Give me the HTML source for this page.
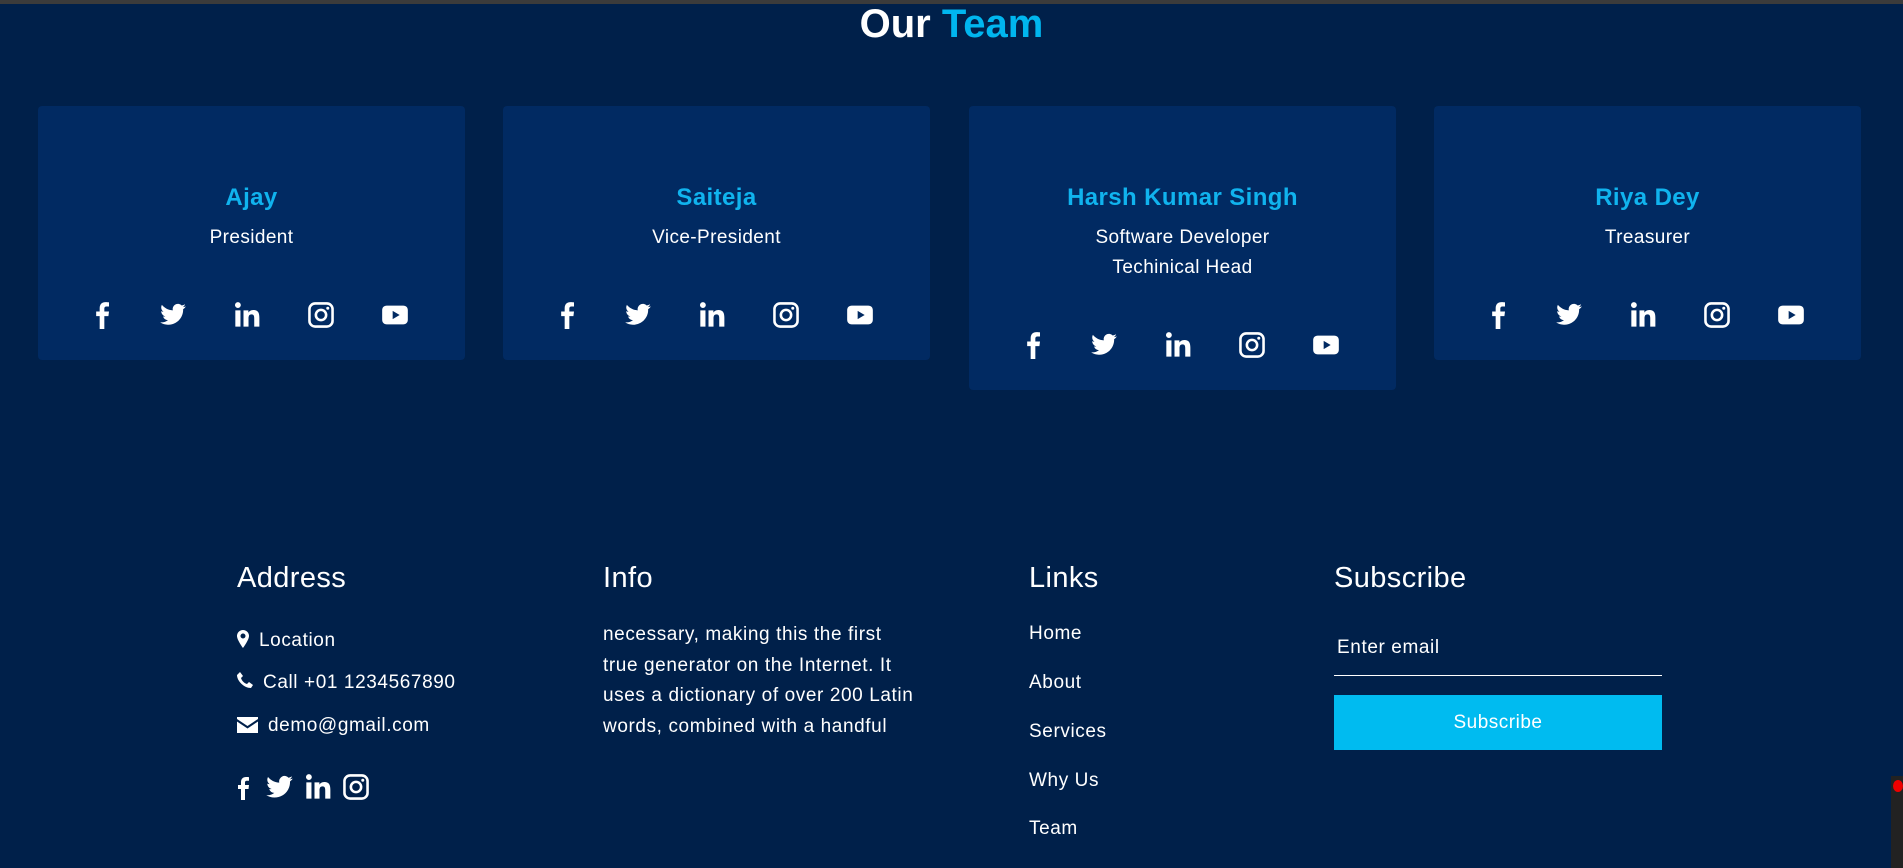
<!DOCTYPE html>
<html><head><meta charset="utf-8"><style>
*{margin:0;padding:0;box-sizing:border-box}
body{width:1903px;height:868px;overflow:hidden;background:#00204a;font-family:"Liberation Sans",sans-serif;color:#fff;position:relative}
.top{position:absolute;left:0;top:0;width:1903px;height:4px;background:#3b3b3b}
h1{position:absolute;top:2px;left:0;width:1903px;text-align:center;font-size:40px;font-weight:bold}
h1 span{color:#00b6ef}
.card{position:absolute;top:106px;width:427px;height:254px;background:#012a62;border-radius:4px;text-align:center}
.card .n{position:absolute;top:78px;width:100%;font-size:24px;color:#10b3ee;letter-spacing:.4px;font-weight:bold}
.card .r{position:absolute;top:117px;width:100%;font-size:19px;line-height:30px;letter-spacing:.4px}
.card .ic{position:absolute;top:195px;left:0;width:100%;height:26px}
.card .ic svg{position:absolute;top:0;width:28px;height:28px;fill:#fff}
.f{position:absolute;font-size:19px;letter-spacing:.6px}
.fh{position:absolute;top:562px;font-size:29px;letter-spacing:.4px}
.sv svg{fill:#fff}
</style></head><body>
<div class="top"></div>
<h1>Our <span>Team</span></h1>

<svg width="0" height="0" style="position:absolute"><defs>
<symbol id="fb" viewBox="0 0 24 24"><path d="M14 24V13h3.5l.5-4h-4V6.6c0-1.1.4-1.9 2-1.9h2V1.2C17.6 1.1 16.4 1 15 1c-3 0-5 1.8-5 5.2V9H7v4h3v11z"/></symbol>
<symbol id="tw" viewBox="0 0 24 24"><path d="M23 4.6c-.8.4-1.7.6-2.6.7.9-.6 1.6-1.4 2-2.5-.9.5-1.900.9-2.9 1.1a4.5 4.5 0 0 0-7.7 4.1C8 7.8 4.7 6 2.5 3.3c-1.2 2.1-.5 4.6 1.4 6-.7 0-1.4-.2-2-.6 0 2.2 1.6 4.1 3.6 4.5-.7.2-1.4.2-2 .1.6 1.8 2.3 3.1 4.2 3.1A9 9 0 0 1 1 18.3 12.8 12.8 0 0 0 20.7 7c.9-.6 1.7-1.4 2.3-2.4z"/></symbol>
<symbol id="li" viewBox="0 0 24 24"><path d="M2 8h4.4v14H2zM4.2 1a2.5 2.5 0 1 1 0 5 2.5 2.5 0 0 1 0-5zM9 8h4.2v2c.6-1.1 2-2.3 4.2-2.3 4.4 0 5.2 2.9 5.2 6.7V22h-4.4v-6.8c0-1.6 0-3.7-2.3-3.7s-2.6 1.8-2.6 3.6V22H9z"/></symbol>
<symbol id="ig" viewBox="0 0 24 24"><path fill-rule="evenodd" d="M7 1h10a6 6 0 0 1 6 6v10a6 6 0 0 1-6 6H7a6 6 0 0 1-6-6V7a6 6 0 0 1 6-6zm0 2.2A3.8 3.8 0 0 0 3.2 7v10A3.8 3.8 0 0 0 7 20.8h10a3.8 3.8 0 0 0 3.8-3.8V7A3.8 3.8 0 0 0 17 3.2zM12 6.5a5.5 5.5 0 1 1 0 11 5.5 5.5 0 0 1 0-11zm0 2.2a3.3 3.3 0 1 0 0 6.6 3.3 3.3 0 0 0 0-6.6zM17.8 4.9a1.3 1.3 0 1 1 0 2.6 1.3 1.3 0 0 1 0-2.6z"/></symbol>
<symbol id="yt" viewBox="0 0 24 24"><path fill-rule="evenodd" d="M5 4h14c2.5 0 4 1.5 4 4v8c0 2.5-1.5 4-4 4H5c-2.5 0-4-1.5-4-4V8c0-2.5 1.5-4 4-4zm5 4.5v7l6-3.5z"/></symbol>
</defs></svg>

<div class="card" style="left:38px"><div class="n">Ajay</div><div class="r">President</div>
<div class="ic"><svg style="left:50px"><use href="#fb"/></svg><svg style="left:121px"><use href="#tw"/></svg><svg style="left:195px"><use href="#li"/></svg><svg style="left:269px"><use href="#ig"/></svg><svg style="left:343px"><use href="#yt"/></svg></div></div>
<div class="card" style="left:503px"><div class="n">Saiteja</div><div class="r">Vice-President</div>
<div class="ic"><svg style="left:50px"><use href="#fb"/></svg><svg style="left:121px"><use href="#tw"/></svg><svg style="left:195px"><use href="#li"/></svg><svg style="left:269px"><use href="#ig"/></svg><svg style="left:343px"><use href="#yt"/></svg></div></div>
<div class="card" style="left:969px;height:284px"><div class="n">Harsh Kumar Singh</div><div class="r">Software Developer<br>Techinical Head</div>
<div class="ic" style="top:225px"><svg style="left:50px"><use href="#fb"/></svg><svg style="left:121px"><use href="#tw"/></svg><svg style="left:195px"><use href="#li"/></svg><svg style="left:269px"><use href="#ig"/></svg><svg style="left:343px"><use href="#yt"/></svg></div></div>
<div class="card" style="left:1434px"><div class="n">Riya Dey</div><div class="r">Treasurer</div>
<div class="ic"><svg style="left:50px"><use href="#fb"/></svg><svg style="left:121px"><use href="#tw"/></svg><svg style="left:195px"><use href="#li"/></svg><svg style="left:269px"><use href="#ig"/></svg><svg style="left:343px"><use href="#yt"/></svg></div></div>

<div class="fh" style="left:237px">Address</div>
<div class="fh" style="left:603px">Info</div>
<div class="fh" style="left:1029px">Links</div>
<div class="fh" style="left:1334px">Subscribe</div>

<div class="f" style="left:237px;top:630px"><svg width="12" height="18" viewBox="0 0 12 18" style="vertical-align:-2px;margin-right:10px"><path fill="#fff" d="M6 0a6 6 0 0 1 6 6c0 4-6 12-6 12S0 10 0 6a6 6 0 0 1 6-6zm0 3.5a2.5 2.5 0 1 0 0 5 2.5 2.5 0 0 0 0-5z"/></svg>Location</div>
<div class="f" style="left:237px;top:672px"><svg width="16" height="17" viewBox="0 0 16 17" style="vertical-align:-1px;margin-right:10px"><path fill="#fff" d="M3 0l3 4-2 2c1 3 3 5 6 6l2-2 4 3-2 3C7 16 0 9 0 3z"/></svg>Call +01 1234567890</div>
<div class="f" style="left:237px;top:715px"><svg width="21" height="16" viewBox="0 0 21 16" style="vertical-align:-2px;margin-right:10px"><path fill="#fff" d="M0 0h21v2l-10.5 7L0 2zM0 4.5l10.5 7 10.5-7V16H0z"/></svg>demo@gmail.com</div>
<div class="sv" style="position:absolute;left:234px;top:773px"><svg width="24" height="30" style="position:absolute;left:-3px"><use href="#fb"/></svg><svg width="29" height="29" style="position:absolute;left:31px"><use href="#tw"/></svg><svg width="28" height="28" style="position:absolute;left:70px"><use href="#li"/></svg><svg width="28" height="28" style="position:absolute;left:108px"><use href="#ig"/></svg></div>

<div class="f" style="left:603px;top:620px;width:330px;line-height:30.5px">necessary, making this the first<br>true generator on the Internet. It<br>uses a dictionary of over 200 Latin<br>words, combined with a handful</div>

<div class="f" style="left:1029px;top:623px">Home</div>
<div class="f" style="left:1029px;top:672px">About</div>
<div class="f" style="left:1029px;top:721px">Services</div>
<div class="f" style="left:1029px;top:770px">Why Us</div>
<div class="f" style="left:1029px;top:818px">Team</div>

<div class="f" style="left:1337px;top:637px">Enter email</div>
<div style="position:absolute;left:1334px;top:675px;width:328px;height:1px;background:#fff"></div>
<div style="position:absolute;left:1334px;top:695px;width:328px;height:55px;background:#00bbf0;text-align:center;line-height:55px;font-size:19px;letter-spacing:.5px">Subscribe</div>

<div style="position:absolute;left:1891px;top:776px;width:12px;height:92px;background:#222"></div>
<div style="position:absolute;left:1893px;top:780px;width:10px;height:12px;border-radius:50%;background:#e00"></div>
</body></html>
